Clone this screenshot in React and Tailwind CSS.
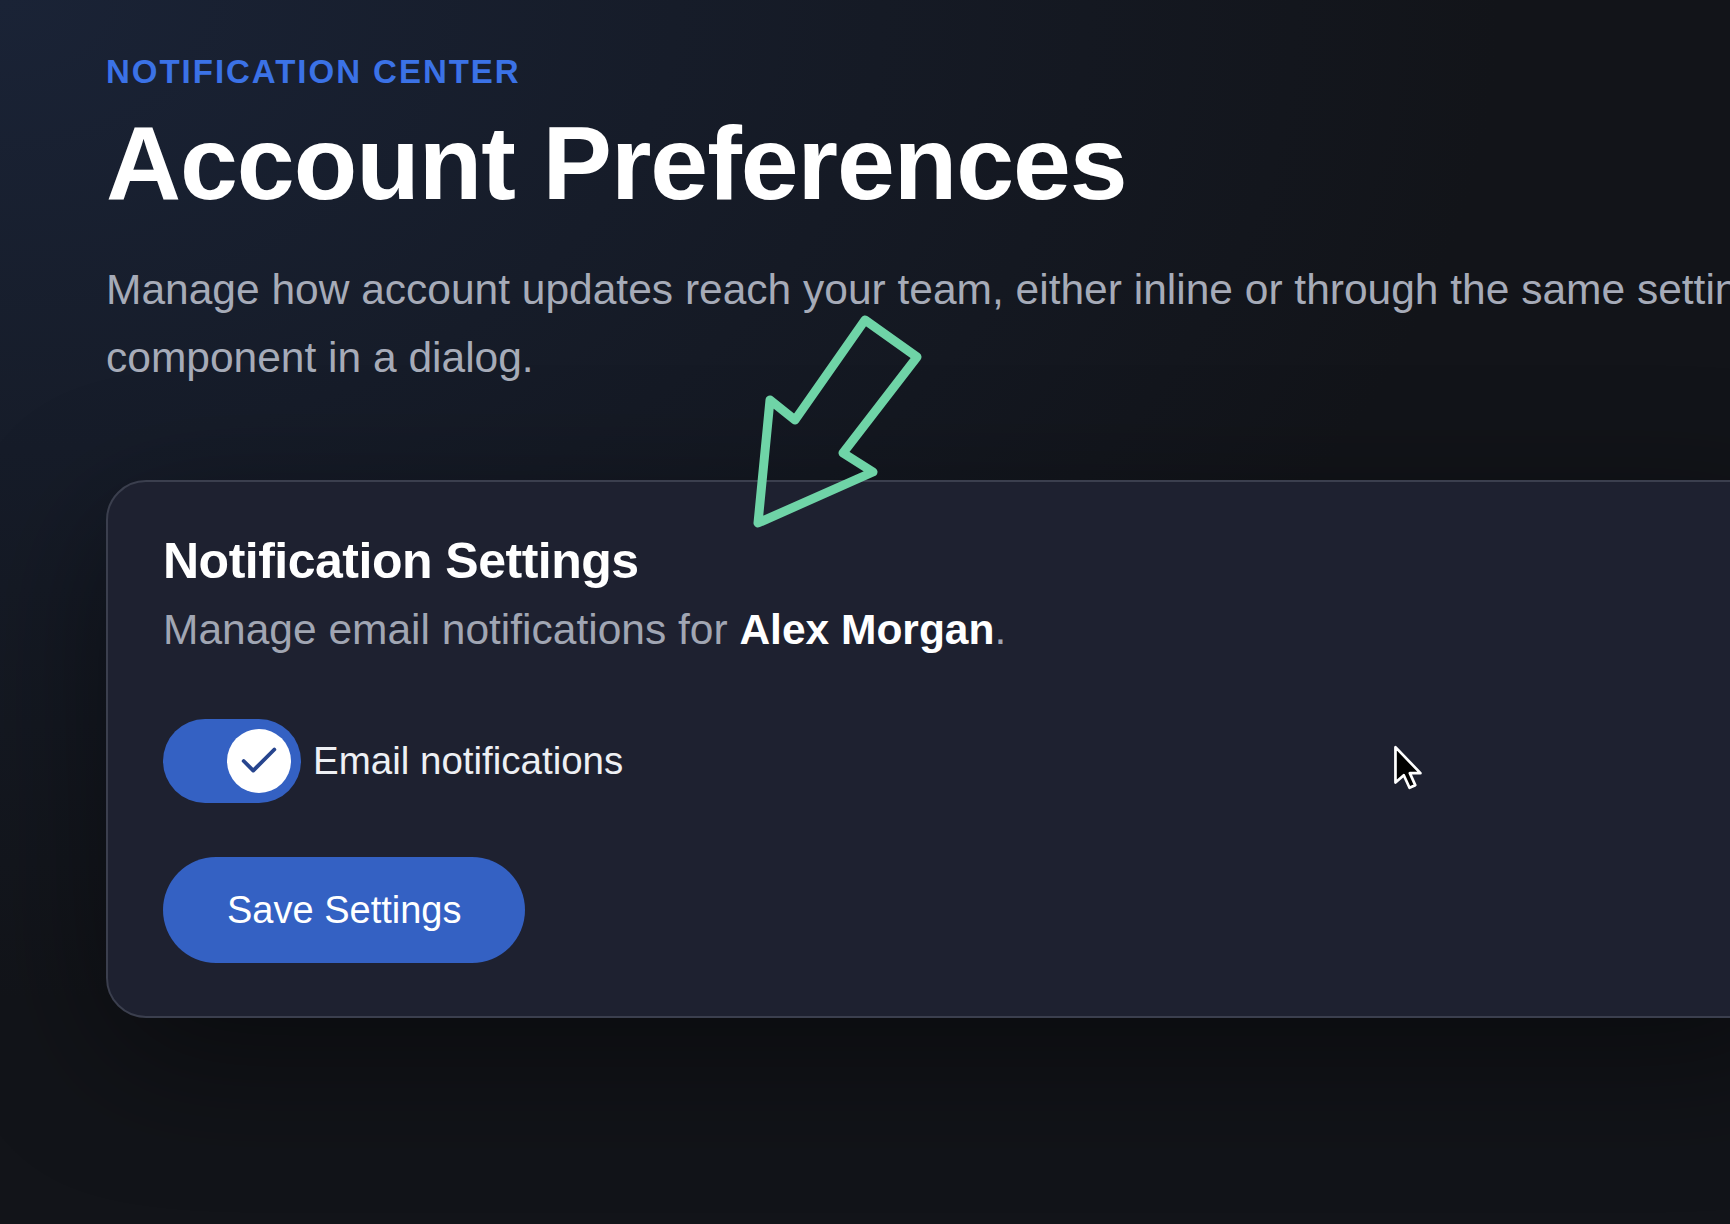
import { Check } from 'lucide-react'

function Toggle({ on }) {
  return (
    <button
      type="button"
      role="switch"
      aria-checked={on}
      className="flex h-[84px] w-[138px] shrink-0 items-center justify-end rounded-full bg-[#3461c3] p-[10px]"
    >
      <span className="flex h-[64px] w-[64px] items-center justify-center rounded-full bg-white">
        <Check size={46} strokeWidth={2} className="text-[#27458e]" />
      </span>
    </button>
  )
}

function AnnotationArrow() {
  return (
    <svg
      className="pointer-events-none absolute left-[740px] top-[300px]"
      width="200"
      height="240"
      viewBox="0 0 200 240"
      fill="none"
    >
      <polygon
        points="125,20 177,57 103,153 133,172 18,223 30,100 55,120"
        stroke="#6fd4a7"
        strokeWidth="9"
        strokeLinejoin="round"
      />
    </svg>
  )
}

function Cursor() {
  return (
    <svg
      className="pointer-events-none absolute left-[1392px] top-[744px]"
      width="34"
      height="50"
      viewBox="0 0 32 48"
    >
      <path
        d="M3 3 L3 37 L11 30 L16.5 42 L22 39.5 L16.8 28 L27 28 Z"
        fill="#000"
        stroke="#fff"
        strokeWidth="2.6"
        strokeLinejoin="round"
      />
    </svg>
  )
}

export default function App() {
  return (
    <div className="relative h-screen w-full overflow-hidden bg-[#121419] bg-[radial-gradient(ellipse_1500px_1000px_at_0%_0%,#1a2336_0%,#161c29_45%,#121419_100%)] font-['Liberation_Sans',Arial,sans-serif] text-white">
      <main className="w-[1800px] pl-[106px] pt-[52px]">
        <p className="text-[33px] font-bold uppercase leading-[40px] tracking-[0.06em] text-[#3b72e6]">
          Notification Center
        </p>
        <h1 className="mt-[19px] text-[104px] font-bold leading-[104px] tracking-[-0.01em] text-white">
          Account Preferences
        </h1>
        <p className="mt-[41px] max-w-[1720px] text-[42.5px] leading-[68px] text-[#a6abb8]">
          Manage how account updates reach your team, either inline or through the same settings component in a dialog.
        </p>

        <section className="mt-[88px] rounded-[40px] border-2 border-[#3b3f4e] bg-[#1e2130] px-[55px] pb-[53px] pt-[50px] shadow-[0_40px_140px_rgba(0,0,0,0.45)]">
          <h2 className="text-[50px] font-bold leading-[58px] tracking-[-0.01em] text-white">
            Notification Settings
          </h2>
          <p className="mt-[12px] text-[42.5px] leading-[56px] text-[#a1a6b3]">
            Manage email notifications for <strong className="font-bold text-white">Alex Morgan</strong>.
          </p>

          <div className="mt-[61px] flex items-center gap-[12px]">
            <Toggle on />
            <span className="text-[38.5px] leading-[48px] text-[#eef0f4]">Email notifications</span>
          </div>

          <button
            type="button"
            className="mt-[54px] flex h-[106px] items-center rounded-full bg-[#3461c3] px-[64px] text-[38px] text-white"
          >
            Save Settings
          </button>
        </section>
      </main>

      <AnnotationArrow />
      <Cursor />
    </div>
  )
}
